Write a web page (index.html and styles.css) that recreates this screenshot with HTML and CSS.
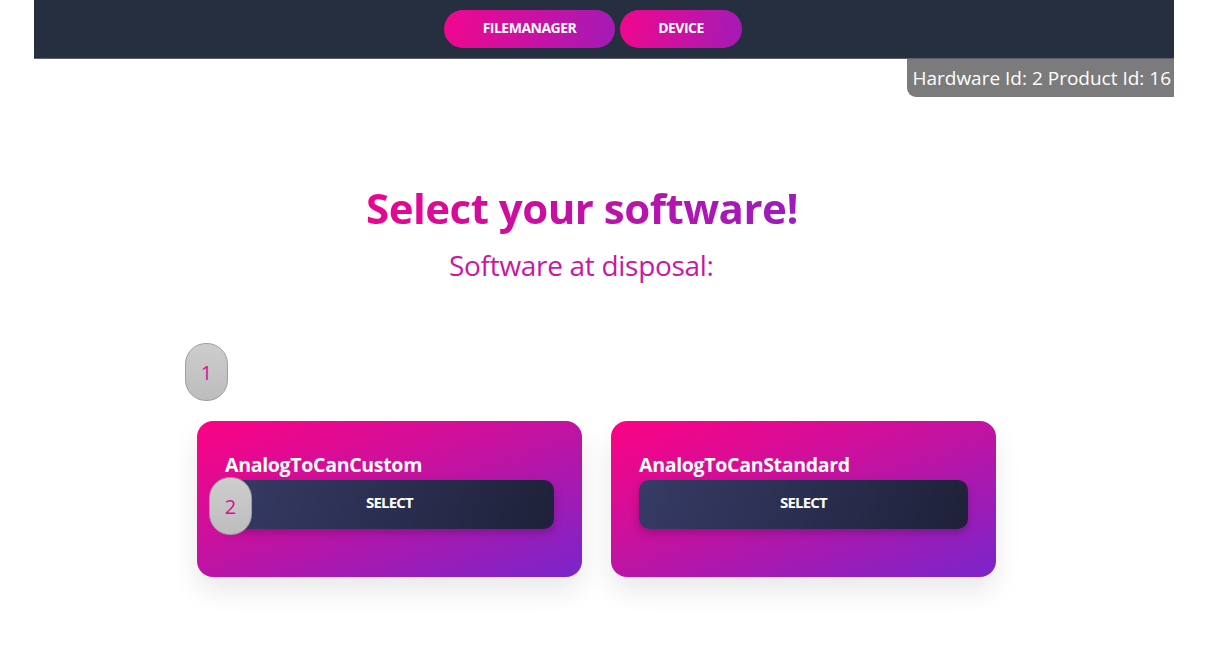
FILE: index.html
```html
<!DOCTYPE html>
<html lang="en">
<head>
<meta charset="utf-8">
<title>Select your software</title>
<link rel="stylesheet" href="styles.css">
</head>
<body>
<div class="page">
  <header class="topbar">
    <nav class="nav">
      <a class="nav-btn nav-btn-file">FILEMANAGER</a>
      <a class="nav-btn nav-btn-device">DEVICE</a>
    </nav>
  </header>
  <div class="idbar">
    <div class="idbadge">Hardware Id: 2 Product Id: 16</div>
  </div>
  <main class="main">
    <h1 class="title">Select your software!</h1>
    <h2 class="subtitle">Software at disposal:</h2>
    <div class="list">
      <span class="callout callout-1">1</span>
      <div class="cards">
        <div class="card">
          <div class="card-name">AnalogToCanCustom</div>
          <button class="select-btn">SELECT</button>
          <span class="callout callout-2">2</span>
        </div>
        <div class="card">
          <div class="card-name">AnalogToCanStandard</div>
          <button class="select-btn">SELECT</button>
        </div>
      </div>
    </div>
  </main>
</div>
</body>
</html>
```

FILE: styles.css
```css
* { box-sizing: border-box; }
html, body { margin: 0; padding: 0; background: #ffffff; }
body { font-family: "Open Sans", "Liberation Sans", sans-serif; }

.page {
  width: 1140px;
  margin-left: 34px;
}

.topbar {
  height: 59px;
  background: #262f40;
  border-bottom: 1px solid #5b6272;
  display: flex;
  justify-content: center;
}
.nav {
  display: flex;
  gap: 5px;
  padding-top: 10px;
  margin-left: -22px;
}
.nav-btn {
  height: 38px;
  border-radius: 19px;
  background: linear-gradient(100deg, #f1078e 0%, #a31bb6 100%);
  color: #fff;
  font-weight: 700;
  font-size: 14px;
  letter-spacing: -0.5px;
  padding-bottom: 3px;
  display: flex;
  align-items: center;
  justify-content: center;
  text-decoration: none;
}
.nav-btn-file { width: 171px; }
.nav-btn-device { width: 122px; }

.idbar {
  display: flex;
  justify-content: flex-end;
}
.idbadge {
  height: 38px;
  width: 267px;
  background: #7b7b7b;
  color: #fff;
  font-size: 19px;
  border-bottom-left-radius: 9px;
  display: flex;
  align-items: center;
  justify-content: flex-end;
  padding-right: 3px;
  letter-spacing: 0;
  white-space: nowrap;
}

.main {
  display: flex;
  flex-direction: column;
}
.title {
  margin: 84px 0 0 332px;
  align-self: flex-start;
  font-size: 42px;
  line-height: 54px;
  font-weight: 700;
  letter-spacing: -0.5px;
  background: linear-gradient(90deg, #e8068f 0%, #9a1dbd 100%);
  -webkit-background-clip: text;
  background-clip: text;
  color: transparent;
}
.subtitle {
  margin: 12px 0 0 415px;
  font-size: 28px;
  line-height: 36px;
  font-weight: 400;
  color: #c916a4;
  letter-spacing: -0.3px;
}

.list {
  position: relative;
  margin-top: 43px;
  padding-top: 95px;
  margin-left: 135px;
  width: 890px;
}
.callout {
  position: absolute;
  width: 43px;
  height: 58px;
  border-radius: 21px;
  background: linear-gradient(180deg, #cdcdcd, #bdbdbd);
  border: 1px solid #9e9e9e;
  color: #d4119a;
  font-size: 20px;
  display: flex;
  align-items: center;
  justify-content: center;
  z-index: 2;
}
.callout-1 { left: 16px; top: 17px; }
.callout-2 { left: 12px; top: 56px; }

.cards {
  display: flex;
  gap: 29px;
  padding: 0 28px 33px 28px;
  overflow: hidden;
}
.card {
  position: relative;
  width: 385px;
  height: 156px;
  border-radius: 16px;
  background: linear-gradient(160deg, #fd0283 0%, #c512a0 45%, #7a25cb 100%);
  box-shadow: 0 14px 28px rgba(0, 0, 0, 0.09);
  padding: 30px 28px 0 28px;
}
.card-name {
  color: #fff;
  font-weight: 700;
  font-size: 19.5px;
  line-height: 28px;
  letter-spacing: -0.3px;
  margin-bottom: 1px;
}
.select-btn {
  display: block;
  width: 100%;
  height: 49px;
  border: 0;
  border-radius: 10px;
  padding: 0 0 5px 0;
  background: linear-gradient(110deg, #363b66 0%, #1f2139 100%);
  box-shadow: 0 4px 8px rgba(40, 0, 40, 0.25);
  color: #fff;
  font-family: "Open Sans", "Liberation Sans", sans-serif;
  font-weight: 700;
  font-size: 15px;
  letter-spacing: -0.8px;
}
```
